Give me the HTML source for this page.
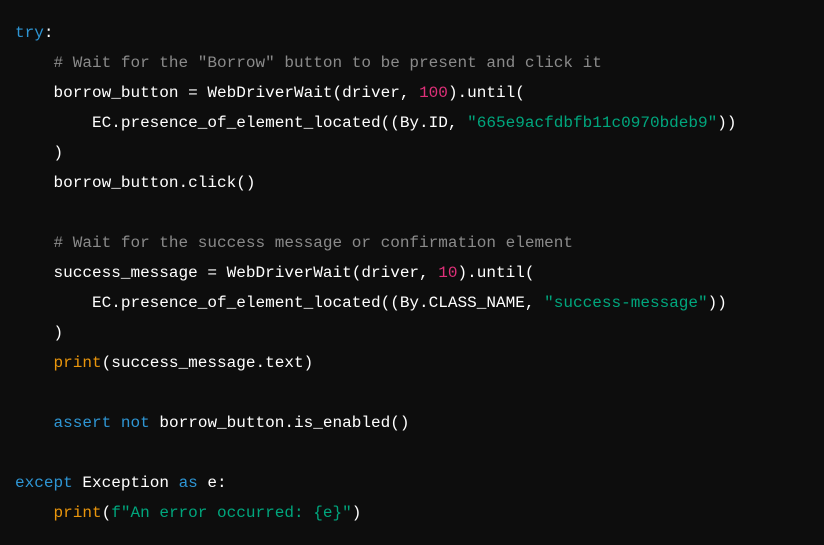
<!DOCTYPE html>
<html><head><style>
html,body{margin:0;padding:0;background:#0d0d0d;width:824px;height:545px;overflow:hidden}
pre{margin:0;position:absolute;left:15px;top:18px;font-family:"Liberation Mono",monospace;font-size:16.05px;line-height:30px;color:#fff;white-space:pre}
.k{color:#2e95d3}.c{color:#8a8a8a}.s{color:#00a67d}.n{color:#df3079}.b{color:#e9950c}
</style></head><body>
<pre><span class="k">try</span>:
    <span class="c"># Wait for the "Borrow" button to be present and click it</span>
    borrow_button = WebDriverWait(driver, <span class="n">100</span>).until(
        EC.presence_of_element_located((By.ID, <span class="s">"665e9acfdbfb11c0970bdeb9"</span>))
    )
    borrow_button.click()

    <span class="c"># Wait for the success message or confirmation element</span>
    success_message = WebDriverWait(driver, <span class="n">10</span>).until(
        EC.presence_of_element_located((By.CLASS_NAME, <span class="s">"success-message"</span>))
    )
    <span class="b">print</span>(success_message.text)

    <span class="k">assert</span> <span class="k">not</span> borrow_button.is_enabled()

<span class="k">except</span> Exception <span class="k">as</span> e:
    <span class="b">print</span>(<span class="s">f"An error occurred: {e}"</span>)</pre>
</body></html>
